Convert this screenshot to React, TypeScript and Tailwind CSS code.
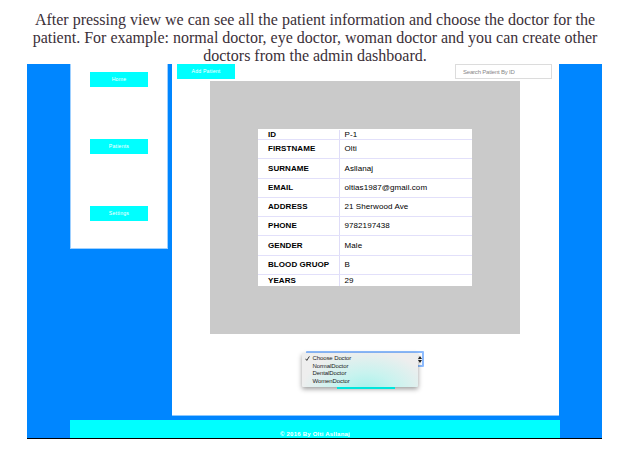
import React from "react";

const patient: { label: string; value: string; row: string }[] = [
  { label: "ID", value: "P-1", row: "h-[11px] pt-px" },
  { label: "FIRSTNAME", value: "Olti", row: "h-[19px]" },
  { label: "SURNAME", value: "Asllanaj", row: "h-[20px]" },
  { label: "EMAIL", value: "oltias1987@gmail.com", row: "h-[19px]" },
  { label: "ADDRESS", value: "21 Sherwood Ave", row: "h-[19px]" },
  { label: "PHONE", value: "9782197438", row: "h-[19px]" },
  { label: "GENDER", value: "Male", row: "h-[20px]" },
  { label: "BLOOD GRUOP", value: "B", row: "h-[19px]" },
  { label: "YEARS", value: "29", row: "h-[11px]" },
];

const doctors = ["Choose Doctor", "NormalDoctor", "DentalDoctor", "WomenDoctor"];

function CyanButton({ children }: { children: React.ReactNode }) {
  return (
    <button className="flex h-[15px] w-[58px] shrink-0 items-center justify-center bg-[#00ffff] text-[5.2px] leading-none tracking-[0.2px] text-white">
      {children}
    </button>
  );
}

function Heading() {
  return (
    <h1 className="flex h-16 w-[627px] flex-col items-center overflow-hidden pt-[11px] pl-[3px] font-['Liberation_Serif',serif] text-[16px] leading-[18px] whitespace-nowrap text-[#3b3038]">
      <span>After pressing view we can see all the patient information and choose the doctor for the</span>
      <span>patient. For example: normal doctor, eye doctor, woman doctor and you can create other</span>
      <span>doctors from the admin dashboard.</span>
    </h1>
  );
}

function PatientTable() {
  return (
    <div className="flex h-[253px] w-[310px] bg-[#cacaca] pt-12 pl-[48px]">
      <div className="h-[157px] w-[214px] bg-white text-[8px] leading-none text-black">
        {patient.map((item) => (
          <div key={item.label} className={`flex border-b border-[#e2e0fa] last:border-b-0 ${item.row}`}>
            <div className="flex w-[82px] items-center border-r border-[#dfddf8] pl-[10px] font-bold tracking-[0.07px] whitespace-nowrap">
              {item.label}
            </div>
            <div className="flex items-center pl-[4.5px] tracking-[0.08px] whitespace-nowrap">{item.value}</div>
          </div>
        ))}
      </div>
    </div>
  );
}

function DoctorSelect() {
  return (
    <div className="relative h-[39px] w-[123px]">
      <div className="ml-1 flex h-[16px] w-[118px] items-center justify-end rounded-[1px] border-2 border-[#8dbcff] bg-white">
        <svg className="h-[7px] w-[4px]" viewBox="0 0 4 7" fill="#222">
          <path d="M0 3 2 0l2 3zM0 4h4L2 7z" />
        </svg>
      </div>
      <div className="relative z-10 mt-[20px] ml-[35px] h-[2px] w-[58px] bg-[#00e5dc]" />
      <ul className="absolute top-[2px] left-0 h-[34px] w-[116px] rounded-[1px] bg-[#eeeeee] bg-[radial-gradient(ellipse_65px_40px_at_64px_38px,#a4f2eb,#c8f3ef_45%,#eeeeee_100%)] pt-[2px] text-[6px] leading-[7.7px] text-[#222] shadow-[0_2px_5px_rgba(0,0,0,0.4)]">
        {doctors.map((doctor, index) => (
          <li key={doctor} className="flex items-center whitespace-nowrap">
            <span className="flex w-[10.5px] justify-center">
              {index === 0 && (
                <svg className="h-[5px] w-[5px]" viewBox="0 0 5 5" fill="none" stroke="#222" strokeWidth="0.9">
                  <path d="m.6 2.8 1.2 1.6L4.4.4" />
                </svg>
              )}
            </span>
            <span className="tracking-[-0.1px]">{doctor}</span>
          </li>
        ))}
      </ul>
    </div>
  );
}

export default function App() {
  return (
    <div className="h-[457px] w-[627px] overflow-hidden bg-white font-['Liberation_Sans',sans-serif]">
      <Heading />
      <div className="ml-[27px] flex h-[375px] w-[575px] flex-col border-b border-black bg-[#0086ff]">
        <div className="flex h-[356px] items-start gap-1 pl-[43px]">
          <nav className="flex h-[185px] w-[98px] flex-col items-center gap-[52px] border border-t-0 border-[#9fd0ff] bg-white pt-2">
            <CyanButton>Home</CyanButton>
            <CyanButton>Patients</CyanButton>
            <CyanButton>Settings</CyanButton>
          </nav>
          <main className="flex h-[352px] w-[387px] flex-col border-b border-[#8bc8ff] bg-white">
            <div className="flex h-[17px] items-start justify-between pr-[7px] pl-[5px]">
              <CyanButton>Add Patient</CyanButton>
              <div className="flex h-[15px] w-[97px] items-center border border-[#dcdcdc] pl-[7px] text-[6px] leading-none tracking-[-0.2px] whitespace-nowrap text-[#888]">
                Search Patient By ID
              </div>
            </div>
            <div className="pl-[38px]">
              <PatientTable />
            </div>
            <div className="pt-[17px] pl-[130px]">
              <DoctorSelect />
            </div>
          </main>
        </div>
        <footer className="ml-[43px] flex h-[18px] w-[490px] items-end justify-center bg-[#00ffff] text-[6px] leading-[8px] font-bold tracking-[0.22px] text-white">
          © 2016 By Olti Asllanaj
        </footer>
      </div>
    </div>
  );
}
